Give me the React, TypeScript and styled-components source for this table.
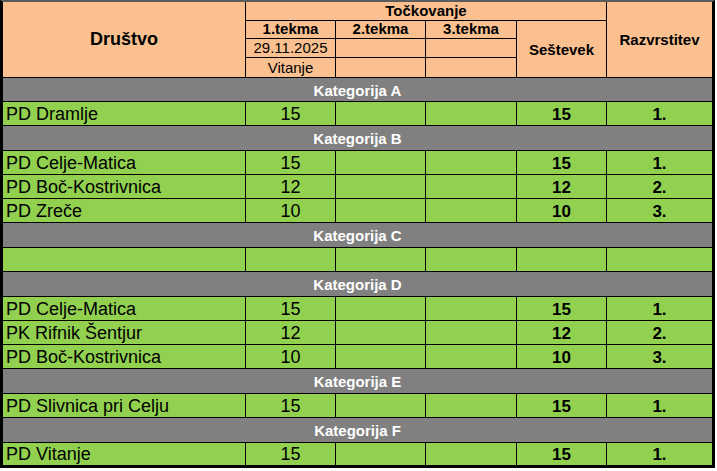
import React from "react";
import styled, { createGlobalStyle } from "styled-components";

const COLS = "243px 90px 90px 91px 90px 105px";

const GlobalStyle = createGlobalStyle`
  html, body {
    margin: 0;
    padding: 0;
    background: #ffffff;
  }
  body {
    font-family: "Liberation Sans", Arial, sans-serif;
  }
`;

const Sheet = styled.div`
  width: 709px;
  border-left: 3px solid #000;
  border-right: 3px solid #000;
  border-bottom: 3px solid #000;
  border-top: 2px solid #5c5c5c;
  color: #000;
`;

const Head = styled.div`
  display: grid;
  grid-template-columns: ${COLS};
  grid-template-rows: 19px 18px 19px 20px;
  background: #fac090;
`;

const HeadCell = styled.div<{
  $col: string;
  $row: string;
  $size?: number;
  $bold?: boolean;
  $align?: "end" | "center";
  $last?: boolean;
}>`
  grid-column: ${(p) => p.$col};
  grid-row: ${(p) => p.$row};
  display: flex;
  justify-content: center;
  align-items: ${(p) => (p.$align === "end" ? "flex-end" : "center")};
  border-bottom: 1px solid #000;
  border-right: ${(p) => (p.$last ? "none" : "1px solid #000")};
  font-size: ${(p) => p.$size ?? 15}px;
  font-weight: ${(p) => (p.$bold ? 700 : 400)};
  line-height: 17px;
  white-space: nowrap;
  padding-bottom: ${(p) => (p.$align === "end" ? "1px" : "0")};
`;

const Band = styled.div<{ $h: number }>`
  height: ${(p) => p.$h}px;
  box-sizing: border-box;
  background: #808080;
  border-bottom: 1px solid #000;
  color: #fff;
  font-size: 15px;
  font-weight: 700;
  display: flex;
  align-items: center;
  justify-content: center;
  padding-top: 1px;
`;

const Row = styled.div<{ $h: number; $end?: boolean }>`
  display: grid;
  grid-template-columns: ${COLS};
  height: ${(p) => p.$h}px;
  box-sizing: border-box;
  background: #92d050;
  border-bottom: ${(p) => (p.$end ? "none" : "1px solid #000")};
`;

const Cell = styled.div<{ $left?: boolean; $bold?: boolean }>`
  display: flex;
  align-items: flex-end;
  justify-content: ${(p) => (p.$left ? "flex-start" : "center")};
  padding-left: ${(p) => (p.$left ? "3px" : "0")};
  font-size: ${(p) => (p.$bold ? 17 : 18)}px;
  font-weight: ${(p) => (p.$bold ? 700 : 400)};
  line-height: 21px;
  white-space: nowrap;
  border-right: 1px solid #000;
  &:last-child {
    border-right: none;
  }
`;

type Entry = { club: string; first: string; total: string; rank: string };

const categories: { name: string; rows: Entry[] }[] = [
  { name: "Kategorija A", rows: [{ club: "PD Dramlje", first: "15", total: "15", rank: "1." }] },
  {
    name: "Kategorija B",
    rows: [
      { club: "PD Celje-Matica", first: "15", total: "15", rank: "1." },
      { club: "PD Boč-Kostrivnica", first: "12", total: "12", rank: "2." },
      { club: "PD Zreče", first: "10", total: "10", rank: "3." },
    ],
  },
  { name: "Kategorija C", rows: [{ club: "", first: "", total: "", rank: "" }] },
  {
    name: "Kategorija D",
    rows: [
      { club: "PD Celje-Matica", first: "15", total: "15", rank: "1." },
      { club: "PK Rifnik Šentjur", first: "12", total: "12", rank: "2." },
      { club: "PD Boč-Kostrivnica", first: "10", total: "10", rank: "3." },
    ],
  },
  { name: "Kategorija E", rows: [{ club: "PD Slivnica pri Celju", first: "15", total: "15", rank: "1." }] },
  { name: "Kategorija F", rows: [{ club: "PD Vitanje", first: "15", total: "15", rank: "1." }] },
];

const App = () => (
  <>
    <GlobalStyle />
    <Sheet>
      <Head>
        <HeadCell $col="1" $row="1 / span 4" $size={18} $bold>
          Društvo
        </HeadCell>
        <HeadCell $col="2 / span 4" $row="1" $bold $align="end">
          Točkovanje
        </HeadCell>
        <HeadCell $col="6" $row="1 / span 4" $bold $last>
          Razvrstitev
        </HeadCell>
        <HeadCell $col="2" $row="2" $bold $align="end">
          1.tekma
        </HeadCell>
        <HeadCell $col="3" $row="2" $bold $align="end">
          2.tekma
        </HeadCell>
        <HeadCell $col="4" $row="2" $bold $align="end">
          3.tekma
        </HeadCell>
        <HeadCell $col="5" $row="2 / span 3" $bold>
          Seštevek
        </HeadCell>
        <HeadCell $col="2" $row="3" $align="end">
          29.11.2025
        </HeadCell>
        <HeadCell $col="3" $row="3" />
        <HeadCell $col="4" $row="3" />
        <HeadCell $col="2" $row="4" $align="end">
          Vitanje
        </HeadCell>
        <HeadCell $col="3" $row="4" />
        <HeadCell $col="4" $row="4" />
      </Head>
      {categories.map((cat, ci) => (
        <React.Fragment key={cat.name}>
          <Band $h={ci === 0 ? 24 : 25}>{cat.name}</Band>
          {cat.rows.map((r, ri) => {
            const end = ci === categories.length - 1 && ri === cat.rows.length - 1;
            return (
              <Row key={ri} $h={end ? 22 : 24} $end={end}>
                <Cell $left>{r.club}</Cell>
                <Cell>{r.first}</Cell>
                <Cell />
                <Cell />
                <Cell $bold>{r.total}</Cell>
                <Cell $bold>{r.rank}</Cell>
              </Row>
            );
          })}
        </React.Fragment>
      ))}
    </Sheet>
  </>
);

export default App;
